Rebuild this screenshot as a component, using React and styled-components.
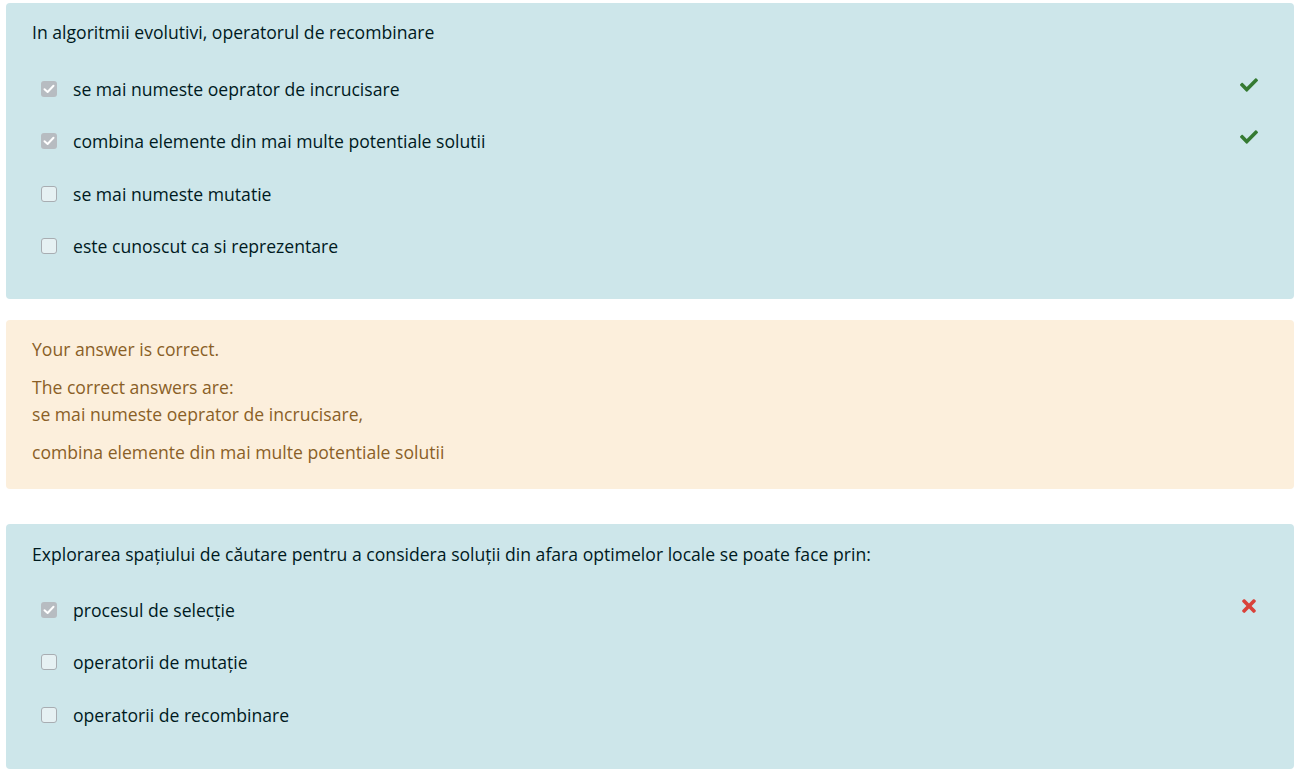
import React from "react";
import styled, { createGlobalStyle } from "styled-components";
import { FaCheck, FaTimes } from "react-icons/fa";

const Global = createGlobalStyle`
  html, body { margin: 0; padding: 0; background: #fff; }
  body { font-family: "Open Sans", "Noto Sans", sans-serif; }
`;

const Page = styled.div`
  padding: 3px 10px 10px 6px;
  display: flex;
  flex-direction: column;
`;

const Card = styled.div`
  background: #cde6ea;
  color: #001a1e;
  border-radius: 4px;
  padding: ${(p) => p.$pad};
  font-size: 17.6px;
  margin-bottom: ${(p) => p.$mb || "0px"};
`;

const QText = styled.div`
  line-height: 26px;
  padding-left: 26px;
  margin-bottom: ${(p) => p.$gap};
`;

const Row = styled.div`
  display: flex;
  align-items: center;
  height: 52.5px;
  padding-left: 35px;
`;

const Box = styled.span`
  width: 16px;
  height: 16px;
  box-sizing: border-box;
  border-radius: 3px;
  flex: none;
  display: flex;
  align-items: center;
  justify-content: center;
  background: ${(p) => (p.$checked ? "#b7bcc1" : "#e6f1f3")};
  border: ${(p) => (p.$checked ? "none" : "1.5px solid #a8adb2")};
`;

const Label = styled.span`
  margin-left: 16px;
  line-height: 26px;
`;

const Mark = styled.span`
  margin-left: auto;
  margin-right: ${(p) => p.$mr};
  margin-bottom: 8px;
  display: flex;
  color: ${(p) => p.$color};
`;

const Outcome = styled.div`
  background: #fcefdc;
  color: #8a5f27;
  border-radius: 4px;
  padding: 16.5px 26px 11.5px;
  font-size: 17.6px;
  line-height: 27px;
  margin-bottom: 35px;
`;

const Para = styled.p`
  margin: 0 0 11px;
`;

const Tick = () => (
  <svg width="12" height="10" viewBox="0 0 12 10">
    <path d="M1.5 5.2 L4.6 8 L10.5 1.8" stroke="#fff" strokeWidth="2" fill="none" strokeLinecap="round" strokeLinejoin="round" />
  </svg>
);

const Answer = ({ checked, text, mark }) => (
  <Row>
    <Box $checked={checked}>{checked && <Tick />}</Box>
    <Label>{text}</Label>
    {mark === "ok" && (
      <Mark $color="#357a32" $mr="36px">
        <FaCheck size={18} />
      </Mark>
    )}
    {mark === "bad" && (
      <Mark $color="#d9423a" $mr="35px">
        <FaTimes size={20} />
      </Mark>
    )}
  </Row>
);

export default function App() {
  return (
    <Page>
      <Global />
      <Card $pad="16px 0 26.5px" $mb="21px">
        <QText $gap="17.25px">In algoritmii evolutivi, operatorul de recombinare</QText>
        <Answer checked text="se mai numeste oeprator de incrucisare" mark="ok" />
        <Answer checked text="combina elemente din mai multe potentiale solutii" mark="ok" />
        <Answer text="se mai numeste mutatie" />
        <Answer text="este cunoscut ca si reprezentare" />
      </Card>
      <Outcome>
        <Para>Your answer is correct.</Para>
        <Para>
          The correct answers are:
          <br />
          se mai numeste oeprator de incrucisare,
        </Para>
        <Para>combina elemente din mai multe potentiale solutii</Para>
      </Outcome>
      <Card $pad="17px 0 28px">
        <QText $gap="16.75px">
          Explorarea spațiului de căutare pentru a considera soluții din afara optimelor locale se poate face prin:
        </QText>
        <Answer checked text="procesul de selecție" mark="bad" />
        <Answer text="operatorii de mutație" />
        <Answer text="operatorii de recombinare" />
      </Card>
    </Page>
  );
}
